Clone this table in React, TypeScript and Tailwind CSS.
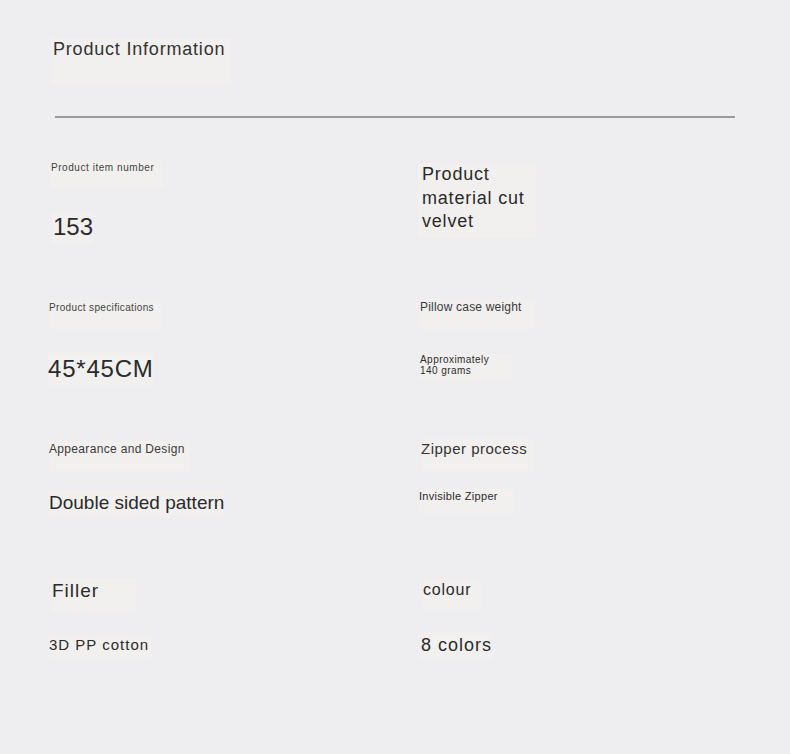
import type React from 'react';

// faint lighter patches sit behind most texts in the reference
const patch = 'inline-block bg-[#f1f0ee]';

interface CellProps {
  label: string;
  value: React.ReactNode;
  labelClass: string;
  valueClass: string;
}

const Cell: React.FC<CellProps> = ({ label, value, labelClass, valueClass }) => (
  <div className="flex w-[370px] flex-col items-start">
    <span className={`${patch} ${labelClass}`}>{label}</span>
    <span className={`${patch} ${valueClass}`}>{value}</span>
  </div>
);

export default function App() {
  return (
    <div
      className="h-[754px] w-[790px] overflow-hidden bg-[#eeeef0] pl-[48px] text-[#2b2b2b]"
      style={{ fontFamily: '"Liberation Sans", "Noto Sans CJK SC", sans-serif' }}
    >
      {/* 标题 */}
      <div className="pt-[38px] pl-[4px]">
        <span className={`${patch} h-[47px] w-[179px] pl-[1px] text-[18px] leading-[22px] tracking-[0.8px] text-[#333]`}>
          Product Information
        </span>
      </div>

      <div className="mt-[31px] ml-[7px] h-[2px] w-[680px] bg-[#9a9a9a]" />

      {/* row 1 */}
      <div className="mt-[32px] flex h-[140px]">
        <Cell
          label="Product item number"
          value="153"
          labelClass="mt-[11px] ml-[3px] w-[112px] pb-[14px] text-[10px] leading-[14px] tracking-[0.55px] text-[#444]"
          valueClass="mt-[22px] ml-[5px] text-[24px] leading-[32px]"
        />
        <div className="flex w-[370px] flex-col items-start">
          <span className={`${patch} mt-[13px] w-[118px] pl-[4px] pb-[4px] text-[18px] leading-[23.5px] tracking-[0.8px]`}>
            Product material cut velvet
          </span>
        </div>
      </div>

      {/* row 2 */}
      <div className="flex h-[140px]">
        <Cell
          label="Product specifications"
          value="45*45CM"
          labelClass="mt-[11px] ml-[1px] w-[112px] pb-[14px] text-[10px] leading-[14px] tracking-[0.35px] text-[#444]"
          valueClass="mt-[24px] text-[24px] leading-[32px] tracking-[0.8px]"
        />
        <div className="flex w-[370px] flex-col items-start">
          <span className={`${patch} mt-[9px] ml-[2px] w-[115px] pb-[14px] text-[12px] leading-[16px] tracking-[0.2px] text-[#3a3a3a]`}>
            Pillow case weight
          </span>
          <span className={`${patch} mt-[25px] ml-[2px] w-[92px] pb-[4px] text-[10px] leading-[11px] tracking-[0.45px]`}>
            Approximately
            <br />
            140 grams
          </span>
        </div>
      </div>

      {/* row 3 */}
      <div className="flex h-[140px]">
        <Cell
          label="Appearance and Design"
          value="Double sided pattern"
          labelClass="mt-[11px] ml-[1px] w-[140px] pb-[14px] text-[12px] leading-[16px] tracking-[0.33px] text-[#3a3a3a]"
          valueClass="mt-[19px] ml-[1px] text-[19px] leading-[26px]"
        />
        <div className="flex w-[370px] flex-col items-start">
          <span className={`${patch} mt-[9px] ml-[3px] w-[113px] pb-[12px] text-[15px] leading-[20px] tracking-[0.5px] text-[#333]`}>
            Zipper process
          </span>
          <span className={`${patch} mt-[18px] ml-[1px] w-[96px] pb-[10px] text-[11px] leading-[14px] tracking-[0.3px]`}>
            Invisible Zipper
          </span>
        </div>
      </div>

      {/* row 4 */}
      <div className="flex h-[140px]">
        <Cell
          label="Filler"
          value="3D PP cotton"
          labelClass="mt-[8px] ml-[4px] w-[84px] pb-[8px] text-[19px] leading-[26px] tracking-[1px]"
          valueClass="mt-[23px] ml-[1px] w-[102px] pb-[4px] text-[15px] leading-[20px] tracking-[1px]"
        />
        <div className="flex w-[370px] flex-col items-start">
          <span className={`${patch} mt-[9px] ml-[5px] w-[58px] pb-[8px] text-[16px] leading-[22px] tracking-[0.8px]`}>
            colour
          </span>
          <span className={`${patch} mt-[24px] ml-[3px] pb-[2px] text-[18px] leading-[24px] tracking-[1px]`}>
            8 colors
          </span>
        </div>
      </div>
    </div>
  );
}
